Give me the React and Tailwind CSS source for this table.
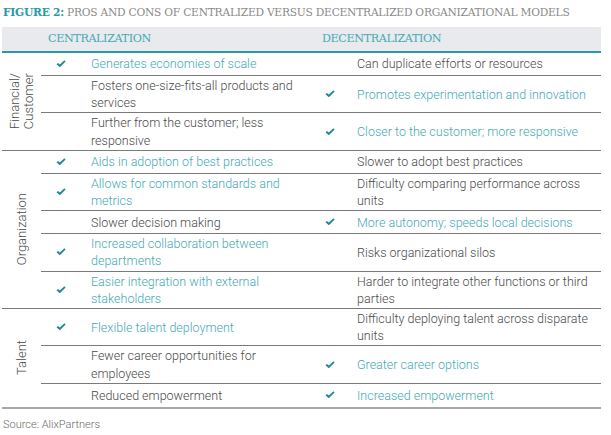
import React from 'react';

const rows = [
  {
    label: ['Financial/', 'Customer'],
    items: [
      ['Generates economies of scale', true, 'Can duplicate efforts or resources', false],
      ['Fosters one-size-fits-all products and services', false, 'Promotes experimentation and innovation', true],
      ['Further from the customer; less responsive', false, 'Closer to the customer; more responsive', true],
    ],
  },
  {
    label: ['Organization'],
    items: [
      ['Aids in adoption of best practices', true, 'Slower to adopt best practices', false],
      ['Allows for common standards and metrics', true, 'Difficulty comparing performance across units', false],
      ['Slower decision making', false, 'More autonomy; speeds local decisions', true],
      ['Increased collaboration between departments', true, 'Risks organizational silos', false],
      ['Easier integration with external stakeholders', true, 'Harder to integrate other functions or third parties', false],
    ],
  },
  {
    label: ['Talent'],
    items: [
      ['Flexible talent deployment', true, 'Difficulty deploying talent across disparate units', false],
      ['Fewer career opportunities for employees', false, 'Greater career options', true],
      ['Reduced empowerment', false, 'Increased empowerment', true],
    ],
  },
];

const Check = () => (
  <svg width="10" height="8" viewBox="0 0 10 8">
    <path d="M0.5 4.2 L2 2.9 L3.8 4.6 L8.4 0.3 L9.6 1.5 L3.8 7.2 Z" fill="#1f8797" />
  </svg>
);

const Cell = ({ text, pro, right }) => (
  <div className={`flex items-center ${right ? 'w-[282px]' : 'w-[277px]'}`}>
    <div className={`flex justify-center shrink-0 ${right ? 'w-[24px]' : 'w-[40px]'}`}>
      {pro && <Check />}
    </div>
    <div
      className={`pr-2 ${right ? 'pl-[15px]' : 'pl-[10px]'} ${pro ? 'text-[#45a9b6]' : 'text-[#4a4a4a]'}`}
    >
      {text}
    </div>
  </div>
);

const App = () => {
  return (
    <div className="w-[611px] h-[435px] bg-white overflow-hidden font-['Roboto',sans-serif] font-light text-[12.5px] leading-[17.2px]">
      <div className="pl-[3px] pt-[4px] h-[27px] font-['DejaVu_Serif',serif] text-[10.7px] tracking-[-0.25px] whitespace-nowrap text-[#8a8a8a]">
        <span className="font-semibold text-[#2a98a6]">FIGURE 2:</span> PROS AND CONS OF CENTRALIZED VERSUS DECENTRALIZED ORGANIZATIONAL MODELS
      </div>
      <div className="ml-[2px] w-[599px]">
        <div className="flex items-center h-[24px] bg-[#e8eaed] font-['DejaVu_Serif',serif] text-[11.2px] text-[#45a9b6] tracking-[-0.4px]">
          <div className="w-[46px]" />
          <div className="w-[274px]">CENTRALIZATION</div>
          <div>DECENTRALIZATION</div>
        </div>
        <div className="h-[2px] bg-[#2a98a6]" />
        {rows.map((sec, si) => (
          <div
            key={si}
            className={`flex ${si === rows.length - 1 ? 'border-b-2 border-[#a8a8a8]' : 'border-b border-[#7a7a7a]'}`}
          >
            <div className="w-[39px] flex items-center justify-center text-[#4a4a4a]">
              <div className="[writing-mode:vertical-rl] rotate-180 text-center leading-[14px] text-[13px]">
                {sec.label.map((l) => (
                  <div key={l}>{l}</div>
                ))}
              </div>
            </div>
            <div className="flex-1">
              {sec.items.map((it, i) => (
                <div
                  key={i}
                  className={`flex min-h-[23px] py-[1px] ${i === sec.items.length - 1 ? '' : 'border-b border-[#7a7a7a]'}`}
                >
                  <Cell text={it[0]} pro={it[1]} />
                  <Cell text={it[2]} pro={it[3]} right />
                </div>
              ))}
            </div>
          </div>
        ))}
      </div>
      <div className="pl-[3px] pt-[7px] text-[11px] text-[#6a6a6a]">Source: AlixPartners</div>
    </div>
  );
};

export default App;
